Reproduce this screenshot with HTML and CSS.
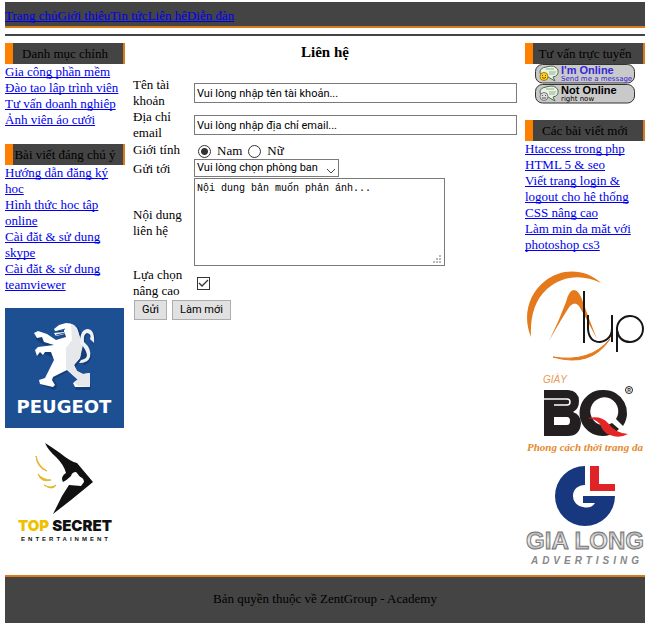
FILE: index.html
```html
<!DOCTYPE html>
<html lang="vi">
<head>
<meta charset="utf-8">
<meta name="viewport" content="width=device-width, initial-scale=1">
<title>Liên hệ</title>
<link rel="stylesheet" href="styles.css">
</head>
<body>
<header class="header">
  <nav class="nav"><a href="#">Trang chủ</a><a href="#">Giới thiệu</a><a href="#">Tin tức</a><a href="#">Liên hệ</a><a href="#">Diễn đàn</a></nav>
</header>
<div class="rule"></div>
<div class="columns">
  <aside class="side">
    <section class="block">
      <h2 class="block-title">Danh mục chính</h2>
      <ul class="links">
        <li><a href="#">Gia công phần mềm</a></li>
        <li><a href="#">Đào tạo lập trình viên</a></li>
        <li><a href="#">Tư vấn doanh nghiệp</a></li>
        <li><a href="#">Ảnh viện áo cưới</a></li>
      </ul>
    </section>
    <section class="block">
      <h2 class="block-title">Bài viết đáng chú ý</h2>
      <ul class="links">
        <li><a href="#">Hướng dẫn đăng ký học</a></li>
        <li><a href="#">Hình thức học tập online</a></li>
        <li><a href="#">Cài đặt &amp; sử dụng skype</a></li>
        <li><a href="#">Cài đặt &amp; sử dụng teamviewer</a></li>
      </ul>
    </section>
    <div class="logos">
      <svg class="logo" viewBox="0 0 120 120">
        <rect width="119" height="120" fill="#1d4f93"/>
        <g transform="translate(-5 -8)">
          <path d="M58 26L66 23L77 26L81 34L84 31Q88 28 92 31Q96 36 93 42L91 43Q91 37 87 33Q83 34 84 43L90 52Q92 60 84 64L78 61L74 68L78 73L88 76L90 86L89 89H75L73 83L79 82L68 70L53 78L56 85L54 89L40 84L39 79L45 78L52 66L54 58L44 53L37 56L35 50L44 48L57 52L57 48L44 44L35 39L36 32L42 33L47 40L58 40L64 35L54 33L58 30L54 28Z" fill="#153e78" transform="translate(1 1)"/>
          <path d="M54 29L59 25L66 23Q76 23 78 31L82 44L80 58L74 65L77 71L83 74L90 73L90 87L75 87L73 83L78 80L67 70L53 77L52 80L55 85L53 87L40 84L39 80L45 78L54 60L51 52L45 52L43 55L40 52L37 56L35 50L38 47L54 45L44 42L42 37L37 38L34 33L38 31L47 34L56 40L66 37L65 34L56 36L54 33L64 32L64 30L55 31Z" fill="#fff"/>
          <path d="M71 24Q78 27 79 35L83 45L80 58L74 65L77 71L83 74L90 73L90 87L78 86L74 82L78 79L66 69L66 48L72 40Z" fill="#e6e8ec"/>
          <path d="M80 43Q80 29 88 29Q95 30 94 43L90 39Q92 34 87 33Q83 34 84 42Q92 49 90 57Q88 63 79 63L81 60Q87 59 87 55Q86 49 80 43Z" fill="#eef0f3"/>
          <path d="M58 31L65 29M56 35L65 33" stroke="#1d4f93" fill="none"/>
        </g>
        <text class="t-peugeot" x="59" y="105">PEUGEOT</text>
      </svg>
      <svg class="logo" viewBox="0 0 120 120">
        <path d="M40 15Q45 18 55 25Q66 34 72 35L88 54L66 72L48 86L57 68L64 57L76 58L79 54Q79 49 72 48L66 48Q62 52 58 54Q55 49 61 45Q59 37 51 29Q43 22 40 15Z" fill="#111"/>
        <path d="M66 48Q67 44 71 44Q73 46 75 49L68 49Z" fill="#fff"/>
        <path d="M31 28Q33 38 42 43Q32 40 31 28ZM33 46Q38 52 46 52Q36 55 33 46ZM39 57Q45 61 51 57Q48 63 39 57Z" fill="#e5b62d" stroke="#e5b62d"/>
        <text class="t-secret" x="60" y="103"><tspan class="gold">TOP</tspan> SECRET</text>
        <text class="t-ent" x="61" y="113">ENTERTAINMENT</text>
      </svg>
    </div>
  </aside>

  <main class="main">
    <h1 class="page-title">Liên hệ</h1>
    <form class="form">
      <label class="label" for="account">Tên tài khoản</label>
      <input class="field" id="account" type="text" value="Vui lòng nhập tên tài khoản...">
      <label class="label" for="email">Địa chỉ email</label>
      <input class="field" id="email" type="text" value="Vui lòng nhập địa chỉ email...">
      <span class="label" id="gender">Giới tính</span>
      <div class="radios" role="radiogroup" aria-labelledby="gender">
        <label class="option"><input class="radio" type="radio" name="gender" checked>Nam</label>
        <label class="option"><input class="radio" type="radio" name="gender">Nữ</label>
      </div>
      <label class="label" for="dept">Gửi tới</label>
      <div class="select-wrap">
        <select class="select" id="dept"><option>Vui lòng chọn phòng ban</option></select>
        <svg class="chevron" viewBox="0 0 8 5"><path d="M0 0L4 4L8 0" fill="none" stroke="#444"/></svg>
      </div>
      <label class="label" for="message">Nội dung liên hệ</label>
      <div class="area-wrap">
        <textarea class="area" id="message">Nội dung bản muốn phản ánh...</textarea>
        <svg class="grip" viewBox="0 0 8 8"><path d="M6 0h2v2h-2zM3 3h2v2h-2zM6 3h2v2h-2zM0 6h2v2h-2zM3 6h2v2h-2zM6 6h2v2h-2z" fill="#b8b8b8"/></svg>
      </div>
      <label class="label" for="advanced">Lựa chọn nâng cao</label>
      <div class="check-wrap">
        <input class="check" id="advanced" type="checkbox" checked>
        <svg class="tick" viewBox="0 0 13 13"><path d="M2 6L5 9L11 3" fill="none" stroke="#333" stroke-width="1.3"/></svg>
      </div>
      <div class="actions">
        <button class="button" type="submit">Gửi</button>
        <button class="button" type="reset">Làm mới</button>
      </div>
    </form>
  </main>

  <aside class="side">
    <section class="block">
      <h2 class="block-title">Tư vấn trực tuyến</h2>
      <div class="badges">
        <svg class="badge" viewBox="0 0 100 20">
          <rect x=".5" y=".5" width="99" height="18.500" rx="7" fill="#c9c9c9" stroke="#333"/>
          <path d="M11 3Q20 0 23 6Q24 12 18 13L20 17L13 13Q5 13 5 8Q5 4 11 3Z" fill="#e9f3e4" stroke="#4e6a4e"/>
          <path d="M11 5h8M14 8h7M14 10h6" stroke="#8fb08f"/>
          <circle cx="9" cy="12.500" r="4" fill="#ffd51f" stroke="#a87b00"/>
          <path d="M7 13Q9 16 11 13M7.500 11v1M10.500 11v1" fill="none" stroke="#6b4c00"/>
          <text class="t-status blue" x="26" y="10">I'm Online</text>
          <text class="t-note blue" x="26" y="17">Send me a message</text>
        </svg>
        <svg class="badge" viewBox="0 0 100 20">
          <rect x=".5" y=".5" width="99" height="18.500" rx="7" fill="#c9c9c9" stroke="#333"/>
          <path d="M11 3Q20 0 23 6Q24 12 18 13L20 17L13 13Q5 13 5 8Q5 4 11 3Z" fill="#e9f3e4" stroke="#4e6a4e"/>
          <path d="M11 5h8M14 8h7M14 10h6" stroke="#8fb08f"/>
          <circle cx="9" cy="12.500" r="4" fill="#ddd" stroke="#777"/>
          <path d="M7 14h4M7.500 11v1M10.500 11v1" fill="none" stroke="#555"/>
          <text class="t-status" x="26" y="10">Not Online</text>
          <text class="t-note" x="26" y="17">right now</text>
        </svg>
      </div>
    </section>
    <section class="block">
      <h2 class="block-title">Các bài viết mới</h2>
      <ul class="links">
        <li><a href="#">Htaccess trong php</a></li>
        <li><a href="#">HTML 5 &amp; seo</a></li>
        <li><a href="#">Viết trang login &amp; logout cho hệ thống</a></li>
        <li><a href="#">CSS nâng cao</a></li>
        <li><a href="#">Làm mịn da mặt với photoshop cs3</a></li>
      </ul>
    </section>
    <div class="logos">
      <svg class="logo" viewBox="0 0 120 100">
        <path d="M76 15C60 0 36 0 20 13C4 25-3 48 6 69C5 48 10 32 22 21C38 7 58 6 76 15Z" fill="#e47a1c"/>
        <path d="M28 89Q66 100 85 71Q65 95 28 89Z" fill="#e47a1c" stroke="#e47a1c"/>
        <path d="M24 73Q34 53 41 34Q44 22 49 22Q54 22 58 34Q64 51 72 71Q61 50 54 38Q50 33 45 38Q38 48 24 73Z" fill="#e47a1c"/>
        <path d="M59 23V75M63 47V61Q64 74 75 74Q87 72 87 60V47M92 84V60A13 13 0 1 1 105 74Q94 74 92 62M87 47V74" fill="none" stroke="#161616" stroke-width="2"/>
      </svg>
      <svg class="logo" viewBox="0 7 120 98">
        <text class="t-giay" x="18" y="22">GIÀY</text>
        <path d="M19 29H43Q54 30 54 40Q54 48 48 51Q56 54 56 62Q55 75 43 75H19Z" fill="#231f20"/>
        <path d="M19 38H42Q45 38 45 41Q45 44 42 44H29" fill="none" stroke="#fff" stroke-width="1.5"/>
        <path d="M29 56H42Q45 56 45 60Q45 64 42 64H29Z" fill="#fff"/>
        <path d="M79 29A23 23 0 1 0 94 68L87 62A14 14 0 1 1 91 58L98 65A23 23 0 0 0 79 29Z" fill="#231f20"/>
        <path d="M63 57Q76 54 83 62Q90 72 103 73Q94 78 85 74Q78 72 75 63Q70 58 63 57Z" fill="#e32526"/>
        <circle cx="104" cy="29" r="3.500" fill="none" stroke="#231f20"/>
        <text class="t-reg" x="104" y="31">R</text>
        <text class="t-slogan" x="60" y="90">Phong cách thời trang da</text>
      </svg>
      <svg class="logo" viewBox="0 0 120 100">
        <defs><linearGradient id="steel" x2="0" y2="1"><stop stop-color="#888"/><stop offset=".5" stop-color="#f1f1f1"/><stop offset="1" stop-color="#999"/></linearGradient></defs>
        <path d="M60 0A30 30 0 1 0 90 30H58V37H70Q66 43 58 41A11 11 0 0 1 60 19Z" fill="#17377f"/>
        <path d="M65 0H74V18H90V25H65Z" fill="#df2428"/>
        <text class="t-gialong" x="60" y="83">GIA LONG</text>
        <text class="t-adv" x="62" y="98">ADVERTISING</text>
      </svg>
    </div>
  </aside>
</div>
<footer class="footer">Bản quyền thuộc về ZentGroup - Academy</footer>
</body>
</html>
```
FILE: styles.css
```css
* { box-sizing: border-box; }

body {
  margin: 2px 5px 0;
  background: #fff;
  color: #000;
  font: 13px/16px "Liberation Serif", serif;
}

a {
  color: #00e;
  text-decoration: underline;
  text-decoration-skip-ink: none;
}

.header {
  padding: 6px 0 2px;
  background: #444;
  border-bottom: 2px solid #d97a1c;
}

.nav { display: flex; }
.rule { height: 2px; margin: 6px 0 7px; background: #444; }
.columns { display: flex; gap: 8px; }
.side { flex: 0 0 120px; }
.block { margin-bottom: 16px; }

.block-title {
  margin: 0;
  padding: 2px 6px 2px 0;
  background: #444;
  border-left: 8px solid #ff7f00;
  border-right: 2px solid #d97a1c;
  font-size: 13px;
  font-weight: normal;
  line-height: 17px;
  text-align: center;
}

.links { margin: 0; padding: 0; list-style: none; }
.logos { display: flex; flex-direction: column; margin-top: -1px; }
.logo { display: block; width: 100%; }
.badges { display: flex; flex-direction: column; align-items: center; }
.badge { display: block; width: 100px; }

.main { flex: 1; min-width: 0; }

.page-title {
  margin: 0 0 16px;
  font-size: 15px;
  line-height: 18px;
  text-align: center;
}

.form {
  display: grid;
  grid-template-columns: 53px 1fr;
  column-gap: 8px;
  align-items: center;
}

.field, .select, .button {
  color: #000;
  font: 11px/16px Roboto, sans-serif;
}

.field {
  width: 100%;
  height: 20px;
  padding: 0 2px;
  border: 1px solid #7a7a7a;
  border-radius: 0;
  background: #fff;
}

.radios { display: flex; gap: 6px; padding: 2px 4px 0; }
.option { display: flex; align-items: center; gap: 6px; }

.radio {
  appearance: none;
  width: 13px;
  height: 13px;
  margin: 0;
  border: 1px solid #333;
  border-radius: 50%;
  background: #fff;
}

.radio:checked { background: radial-gradient(circle, #333 0 3px, #fff 4px); }

.select-wrap, .area-wrap, .check-wrap {
  position: relative;
  justify-self: start;
}

.select-wrap { width: 145px; margin-bottom: 1px; }

.select {
  display: block;
  appearance: none;
  width: 100%;
  height: 18px;
  padding: 0 2px;
  border: 1px solid #7a7a7a;
  border-radius: 0;
  background: #fff;
}

.chevron { position: absolute; right: 4px; bottom: 3px; width: 8px; height: 5px; pointer-events: none; }

.area {
  display: block;
  width: 251px;
  height: 88px;
  margin-bottom: 1px;
  padding: 3px 2px;
  border: 1px solid #7a7a7a;
  resize: none;
  color: #000;
  font: 10px/14px "Liberation Mono", monospace;
}

.grip { position: absolute; right: 4px; bottom: 4px; width: 8px; height: 8px; pointer-events: none; }
.check-wrap { margin-left: 3px; }

.check {
  display: block;
  appearance: none;
  width: 13px;
  height: 13px;
  margin: 0;
  border: 1px solid #333;
  background: #fff;
}

.tick { position: absolute; inset: 0; display: none; pointer-events: none; }
.check:checked + .tick { display: block; }

.actions { grid-column: 1 / -1; display: flex; gap: 5px; padding: 1px; }

.button {
  height: 20px;
  padding: 0 7px;
  border: 1px solid #adadad;
  background: #e1e1e1;
}

.footer {
  margin-top: 9px;
  padding: 14px 0 16px;
  background: #444;
  border-top: 2px solid #d97a1c;
  text-align: center;
}

.logo text { text-anchor: middle; }
.t-peugeot { fill: #fff; font: bold 18px "DejaVu Sans", sans-serif; }
.t-secret { fill: #111; font: 900 15px Inter, sans-serif; }
.gold { fill: #efc000; }
.t-ent { fill: #111; font: bold 6px "Liberation Sans", sans-serif; letter-spacing: 3px; }
.t-status { font: bold 11px "Liberation Sans", sans-serif; }
.t-note { font: 7px "DejaVu Sans", sans-serif; }
.blue { fill: #3526d9; }
.logo .t-giay { fill: #e99a55; font: italic 10px "Liberation Sans", sans-serif; text-anchor: start; }
.t-reg { fill: #231f20; font: bold 5px "Liberation Sans", sans-serif; }
.t-slogan { fill: #e58a2c; font: italic bold 11px "Liberation Serif", serif; }
.t-gialong { fill: url(#steel); stroke: #777; font: 900 24px "Liberation Sans", sans-serif; }
.t-adv { fill: #888; font: italic bold 10px "Liberation Sans", sans-serif; letter-spacing: 4px; }
```
